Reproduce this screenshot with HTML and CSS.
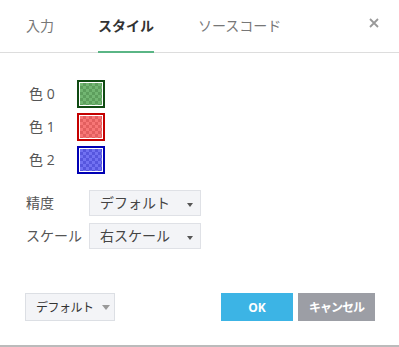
FILE: index.html
```html
<!DOCTYPE html>
<html lang="ja">
<head>
    <meta charset="UTF-8">
    <title>スタイル</title>
    <link rel="stylesheet" href="styles.css">
</head>
<body>
    <div class="dialog">
        <div class="tabs">
            <div class="tab">入力</div>
            <div class="tab active">スタイル</div>
            <div class="tab">ソースコード</div>
            <div class="close">
                <svg width="10" height="10" viewBox="0 0 10 10">
                    <path d="M1 1 L9 9 M9 1 L1 9" stroke="#999" stroke-width="1.8" fill="none"/>
                </svg>
            </div>
        </div>

        <div class="content">
            <div class="color-row">
                <span class="color-label">色 0</span>
                <span class="swatch green"></span>
            </div>
            <div class="color-row">
                <span class="color-label">色 1</span>
                <span class="swatch red"></span>
            </div>
            <div class="color-row">
                <span class="color-label">色 2</span>
                <span class="swatch blue"></span>
            </div>

            <div class="fields">
                <div class="field">
                    <span class="field-label">精度</span>
                    <div class="select">デフォルト<span class="caret"></span></div>
                </div>
                <div class="field">
                    <span class="field-label">スケール</span>
                    <div class="select">右スケール<span class="caret"></span></div>
                </div>
            </div>
        </div>

        <div class="footer">
            <button class="btn-default">デフォルト<span class="caret big"></span></button>
            <div class="actions">
                <button class="btn-ok">OK</button>
                <button class="btn-cancel">キャンセル</button>
            </div>
        </div>
    </div>
</body>
</html>
```

FILE: styles.css
```css
* {
    box-sizing: border-box;
}

body {
    margin: 0;
    background: #fff;
    font-family: "Open Sans", "Noto Sans CJK JP", sans-serif;
    color: #555;
}

.dialog {
    width: 399px;
    height: 347px;
    border-bottom: 2px solid #bbb;
}

.tabs {
    display: flex;
    height: 53px;
    padding-left: 26px;
    border-bottom: 1px solid #ddd;
}

.tab {
    height: 53px;
    margin-right: 44px;
    margin-bottom: -1px;
    padding-top: 16px;
    font-size: 14px;
    line-height: 20px;
    color: #777;
    border-bottom: 2px solid transparent;
}

.tab.active {
    color: #333;
    font-weight: bold;
    border-bottom-color: #5ab585;
}

.close {
    margin-left: auto;
    margin-right: 20px;
    padding-top: 18px;
}

.close svg {
    display: block;
}

.content {
    padding-top: 27px;
}

.color-row {
    display: flex;
    align-items: center;
    height: 28px;
    margin-bottom: 5px;
    padding-left: 29px;
}

.color-label {
    width: 48px;
    font-size: 14px;
    line-height: 20px;
    color: #555;
}

.swatch {
    width: 28px;
    height: 28px;
    padding: 1px;
    border: 2px solid;
    background-clip: content-box;
    background-origin: content-box;
    background-size: 6px 6px;
}

.swatch.green {
    border-color: #0f4a12;
    background-image: repeating-conic-gradient(#5d9e5d 0 25%, #72b672 0 50%);
}

.swatch.red {
    border-color: #c40000;
    background-image: repeating-conic-gradient(#e25f5f 0 25%, #f77676 0 50%);
}

.swatch.blue {
    border-color: #0000b4;
    background-image: repeating-conic-gradient(#5656de 0 25%, #7171f2 0 50%);
}

.fields {
    margin-top: 16px;
    padding-left: 26px;
}

.field {
    display: flex;
    align-items: center;
    height: 26px;
    margin-bottom: 7px;
}

.field-label {
    width: 63px;
    font-size: 14px;
    line-height: 20px;
    color: #555;
}

.select {
    display: flex;
    align-items: center;
    width: 112px;
    height: 26px;
    padding-left: 10px;
    background: #f3f4f7;
    border: 1px solid #dfe1e6;
    font-size: 14px;
    line-height: 20px;
    color: #444;
}

.caret {
    margin-left: auto;
    margin-right: 7px;
    margin-top: 3px;
    border-left: 3.5px solid transparent;
    border-right: 3.5px solid transparent;
    border-top: 4px solid #555;
}

.footer {
    display: flex;
    align-items: center;
    justify-content: space-between;
    margin-top: 44px;
    padding: 0 24px 0 25px;
}

button {
    height: 28px;
    border: none;
    font-family: inherit;
    cursor: pointer;
}

.btn-default {
    display: flex;
    align-items: center;
    width: 90px;
    padding-left: 10px;
    background: #f3f4f7;
    border: 1px solid #dcdfe4;
    font-size: 12px;
    color: #333;
    white-space: nowrap;
    letter-spacing: -0.5px;
}

.caret.big {
    margin-left: 8px;
    margin-right: 0;
    margin-top: 1px;
    border-left-width: 4.5px;
    border-right-width: 4.5px;
    border-top: 5px solid #999;
}

.actions {
    display: flex;
    gap: 5px;
}

.btn-ok,
.btn-cancel {
    color: #fff;
    font-weight: bold;
    font-size: 12px;
}

.btn-ok {
    width: 72px;
    background: #3cb4e5;
}

.btn-cancel {
    width: 77px;
    background: #9c9ea5;
    letter-spacing: -1px;
}
```
